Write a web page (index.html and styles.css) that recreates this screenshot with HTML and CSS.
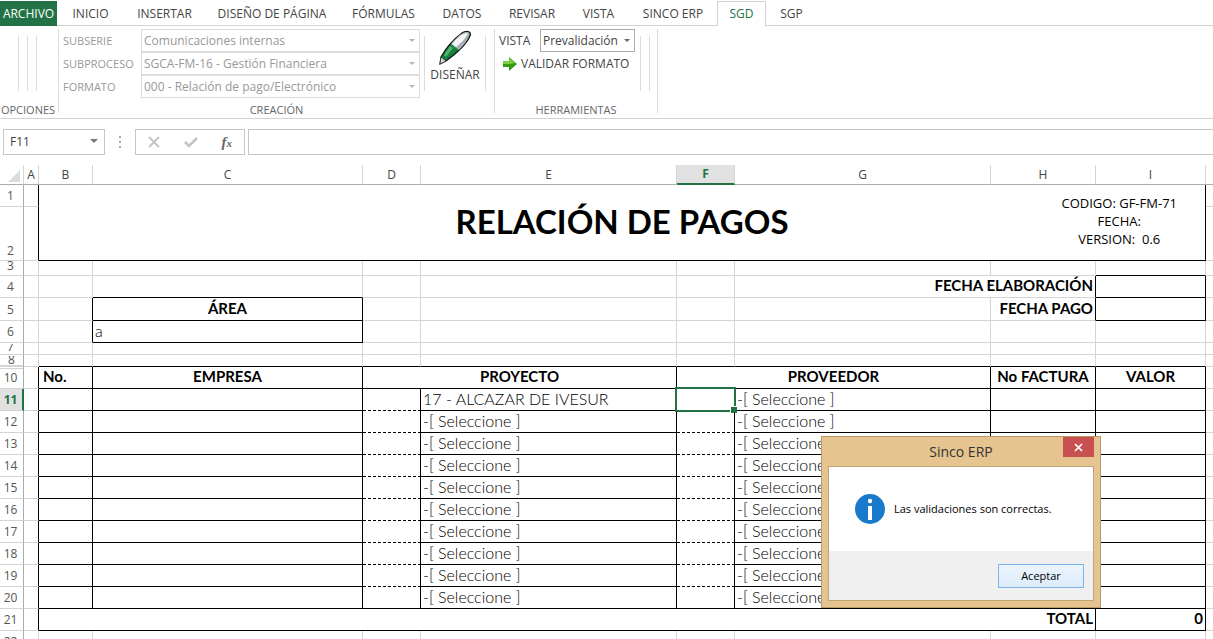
FILE: index.html
```html
<!DOCTYPE html>
<html lang="es">
<head>
<meta charset="utf-8">
<title>Relación de pagos</title>
<link rel="stylesheet" href="styles.css">
</head>
<body>
<nav class="tabs">
  <button class="tab file">ARCHIVO</button>
  <button class="tab t-inicio">INICIO</button>
  <button class="tab t-insertar">INSERTAR</button>
  <button class="tab t-diseno">DISEÑO DE PÁGINA</button>
  <button class="tab t-formulas">FÓRMULAS</button>
  <button class="tab t-datos">DATOS</button>
  <button class="tab t-revisar">REVISAR</button>
  <button class="tab t-vista">VISTA</button>
  <button class="tab t-erp">SINCO ERP</button>
  <button class="tab t-sgd active">SGD</button>
  <button class="tab t-sgp">SGP</button>
</nav>
<section class="ribbon">
  <div class="group g-opciones">
    <div class="tools rules"><i class="rule"></i><i class="rule"></i><i class="rule"></i></div>
    <div class="caption">OPCIONES</div>
  </div>
  <div class="group g-creacion">
    <div class="tools">
      <div class="fields">
        <label for="subserie">SUBSERIE</label>
        <span class="combo"><select id="subserie" disabled><option>Comunicaciones internas</option></select></span>
        <label for="subproceso">SUBPROCESO</label>
        <span class="combo"><select id="subproceso" disabled><option>SGCA-FM-16 - Gestión Financiera</option></select></span>
        <label for="formato">FORMATO</label>
        <span class="combo"><select id="formato" disabled><option>000 - Relación de pago/Electrónico</option></select></span>
      </div>
      <i class="rule"></i>
      <button class="design">
        <svg width="36" height="36" viewBox="0 0 36 36" aria-hidden="true">
          <path d="M3 34 4 27 C9 18 17 9 25 3 C29 0 35 1 33 6 C30 13 20 23 9 31Z" fill="#16803c" stroke="#111" stroke-width="1.200"/>
          <path d="M14 14 C18 9 22 5 26 3 C30 1 34 2 32 6 C30 11 26 16 22 20Z" fill="#aab0b6"/>
          <path d="M15 14 C20 8 25 3 31 3 C29 8 24 13 19 17Z" fill="#f4f5f6"/>
          <path d="M7 25 13 16 16 18 9 27Z" fill="#4fb36d"/>
          <path d="M3 34 4 27 9 31Z" fill="#ddd" stroke="#333" stroke-width=".8"/>
        </svg>
        <span>DISEÑAR</span>
      </button>
      <i class="rule"></i>
    </div>
    <div class="caption">CREACIÓN</div>
  </div>
  <div class="group g-herramientas">
    <div class="tools">
      <div class="stack">
        <div class="view"><label for="vista">VISTA</label><span class="combo on"><select id="vista"><option>Prevalidación</option></select></span></div>
        <button class="validate">
          <svg width="16" height="14" viewBox="0 0 16 14" aria-hidden="true"><path d="M1 4H7V0L15 7 7 14V10H1Z" fill="#369a12"/><path d="M1 4H7V1L13 6 8 7H1Z" fill="#79d040"/></svg>
          <span>VALIDAR FORMATO</span>
        </button>
      </div>
      <i class="rule"></i><i class="rule"></i>
    </div>
    <div class="caption">HERRAMIENTAS</div>
  </div>
</section>
<section class="formula">
  <span class="namebox"><input aria-label="Cuadro de nombres" value="F11"></span>
  <svg class="dots" width="4" height="12" viewBox="0 0 4 12" aria-hidden="true"><path d="M1 0h2v2H1zM1 5h2v2H1zM1 10h2v2H1z" fill="#aaa"/></svg>
  <div class="fx">
    <button aria-label="Cancelar"><svg width="12" height="12" viewBox="0 0 12 12"><path d="M1 1 11 11M11 1 1 11" stroke="#c4c4c4" stroke-width="2"/></svg></button>
    <button aria-label="Introducir"><svg width="14" height="12" viewBox="0 0 14 12"><path d="M1 6 5 10 13 2" fill="none" stroke="#c4c4c4" stroke-width="2.600"/></svg></button>
    <button aria-label="Insertar función" class="fn">f<sub>x</sub></button>
  </div>
  <input class="expr" aria-label="Barra de fórmulas">
</section>
<main class="sheet">
<table class="grid">
  <colgroup><col class="c0"><col class="ca"><col class="cb"><col class="cc"><col class="cd"><col class="ce"><col class="cf"><col class="cg"><col class="ch"><col class="ci"><col></colgroup>
  <thead>
    <tr><th class="corner"><svg width="12" height="12" viewBox="0 0 12 12" aria-hidden="true"><path d="M12 0V12H0Z" fill="#dcdcdc"/></svg></th><th>A</th><th>B</th><th>C</th><th>D</th><th>E</th><th class="sel">F</th><th>G</th><th>H</th><th>I</th><th class="last"></th></tr>
  </thead>
  <tbody>
    <tr class="h22"><th>1</th><td class="r"></td>
      <td class="r b" colspan="8" rowspan="2"><div class="banner"><h1>RELACIÓN DE PAGOS</h1><p>CODIGO: GF-FM-71<br>FECHA:<br>VERSION:&nbsp; 0.6</p></div></td><td></td></tr>
    <tr class="h54"><th>2</th><td class="r"></td><td></td></tr>
    <tr class="h15"><th>3</th><td></td><td></td><td></td><td></td><td></td><td></td><td></td><td></td><td class="b"></td><td></td></tr>
    <tr class="h22"><th>4</th><td></td><td></td><td class="b"></td><td></td><td></td><td></td><td class="r right" colspan="2">FECHA ELABORACIÓN</td><td class="r b"></td><td></td></tr>
    <tr class="h23"><th>5</th><td></td><td class="r"></td><td class="r b center">ÁREA</td><td></td><td></td><td></td><td></td><td class="r right">FECHA PAGO</td><td class="r b"></td><td></td></tr>
    <tr class="h22"><th>6</th><td></td><td class="r"></td><td class="r b text">a</td><td></td><td></td><td></td><td></td><td></td><td></td><td></td></tr>
    <tr class="h12 seven"><th><span>7</span></th><td></td><td></td><td></td><td></td><td></td><td></td><td></td><td></td><td></td><td></td></tr>
    <tr class="h12 eight"><th><span>8</span></th><td></td><td class="b"></td><td class="b"></td><td class="b"></td><td class="b"></td><td class="b"></td><td class="b"></td><td class="b"></td><td class="b"></td><td></td></tr>
    <tr class="h22 heads"><th>10</th><td class="r"></td><td class="r b no">No.</td><td class="r b center">EMPRESA</td><td class="r b center" colspan="2">PROYECTO</td><td class="r b center" colspan="2">PROVEEDOR</td><td class="r b center">No FACTURA</td><td class="r b center">VALOR</td><td></td></tr>
    <tr class="h22"><th class="sel">11</th><td class="r"></td><td class="r b"></td><td class="r b"></td><td class="r d"></td><td class="r b text">17 - ALCAZAR DE IVESUR</td><td class="r d current"><span class="cursor"></span></td><td class="r b text">-[ Seleccione ]</td><td class="r b"></td><td class="r b"></td><td></td></tr>
    <tr class="h22"><th>12</th><td class="r"></td><td class="r b"></td><td class="r b"></td><td class="r d"></td><td class="r b text">-[ Seleccione ]</td><td class="r d"></td><td class="r b text">-[ Seleccione ]</td><td class="r b"></td><td class="r b"></td><td></td></tr>
    <tr class="h22"><th>13</th><td class="r"></td><td class="r b"></td><td class="r b"></td><td class="r d"></td><td class="r b text">-[ Seleccione ]</td><td class="r d"></td><td class="r b text">-[ Seleccione ]</td><td class="r b"></td><td class="r b"></td><td></td></tr>
    <tr class="h22"><th>14</th><td class="r"></td><td class="r b"></td><td class="r b"></td><td class="r d"></td><td class="r b text">-[ Seleccione ]</td><td class="r d"></td><td class="r b text">-[ Seleccione ]</td><td class="r b"></td><td class="r b"></td><td></td></tr>
    <tr class="h22"><th>15</th><td class="r"></td><td class="r b"></td><td class="r b"></td><td class="r d"></td><td class="r b text">-[ Seleccione ]</td><td class="r d"></td><td class="r b text">-[ Seleccione ]</td><td class="r b"></td><td class="r b"></td><td></td></tr>
    <tr class="h22"><th>16</th><td class="r"></td><td class="r b"></td><td class="r b"></td><td class="r d"></td><td class="r b text">-[ Seleccione ]</td><td class="r d"></td><td class="r b text">-[ Seleccione ]</td><td class="r b"></td><td class="r b"></td><td></td></tr>
    <tr class="h22"><th>17</th><td class="r"></td><td class="r b"></td><td class="r b"></td><td class="r d"></td><td class="r b text">-[ Seleccione ]</td><td class="r d"></td><td class="r b text">-[ Seleccione ]</td><td class="r b"></td><td class="r b"></td><td></td></tr>
    <tr class="h22"><th>18</th><td class="r"></td><td class="r b"></td><td class="r b"></td><td class="r d"></td><td class="r b text">-[ Seleccione ]</td><td class="r d"></td><td class="r b text">-[ Seleccione ]</td><td class="r b"></td><td class="r b"></td><td></td></tr>
    <tr class="h22"><th>19</th><td class="r"></td><td class="r b"></td><td class="r b"></td><td class="r d"></td><td class="r b text">-[ Seleccione ]</td><td class="r d"></td><td class="r b text">-[ Seleccione ]</td><td class="r b"></td><td class="r b"></td><td></td></tr>
    <tr class="h22"><th>20</th><td class="r"></td><td class="r b"></td><td class="r b"></td><td class="r b"></td><td class="r b text">-[ Seleccione ]</td><td class="r b"></td><td class="r b text">-[ Seleccione ]</td><td class="r b"></td><td class="r b"></td><td></td></tr>
    <tr class="h22"><th>21</th><td class="r"></td><td class="r b right" colspan="7">TOTAL</td><td class="r b right">0</td><td></td></tr>
    <tr class="h22"><th>22</th><td></td><td></td><td></td><td></td><td></td><td></td><td></td><td></td><td></td><td></td></tr>
  </tbody>
</table>
<div class="dialog" role="dialog" aria-labelledby="dlg-title">
  <header><h2 id="dlg-title">Sinco ERP</h2><button class="close" aria-label="Cerrar"><svg width="9" height="9" viewBox="0 0 9 9"><path d="M1 1 8 8M8 1 1 8" stroke="#fff" stroke-width="1.700"/></svg></button></header>
  <div class="panel">
    <div class="message">
      <svg width="30" height="30" viewBox="0 0 30 30" aria-hidden="true"><circle cx="15" cy="15" r="15" fill="#1979ca"/><circle cx="15" cy="7" r="2.200" fill="#fff"/><path d="M13 12h4v14h-4z" fill="#fff"/></svg>
      <p>Las validaciones son correctas.</p>
    </div>
    <footer><button class="accept">Aceptar</button></footer>
  </div>
</div>
</main>
</body>
</html>
```
FILE: styles.css
```css
* { box-sizing: border-box; }
body {
  margin: 0;
  height: 100vh;
  overflow: hidden;
  display: flex;
  flex-direction: column;
  background: #fff;
  color: #444;
  font: 12px/16px "Open Sans", "Noto Sans", sans-serif;
}
button, input, select { font: inherit; color: inherit; margin: 0; padding: 0; border: 0; background: none; border-radius: 0; }
button { white-space: nowrap; }
svg { display: block; }
h1, h2, p { margin: 0; }

/* Ribbon tabs */
.tabs { display: flex; height: 26px; padding-top: 1px; flex: none; box-shadow: inset 0 -1px #d0d3d1; }
.tab { flex: none; height: 25px; text-align: center; }
.file { width: 57px; background: #217346; color: #fff; }
.t-inicio { width: 67px; }
.t-insertar { width: 81px; }
.t-diseno { width: 134px; }
.t-formulas { width: 89px; }
.t-datos { width: 68px; }
.t-revisar { width: 72px; }
.t-vista { width: 61px; }
.t-erp { width: 88px; }
.t-sgd { width: 49px; }
.t-sgp { width: 51px; }
.active { border: 1px solid #d0d3d1; border-bottom: 0; background: #fff; color: #217346; }

/* Ribbon body */
.ribbon { display: flex; flex: none; height: 93px; padding: 3px 0 5px; border-bottom: 1px solid #d0d3d1; }
.group { display: flex; flex-direction: column; justify-content: space-between; border-right: 1px solid #dcdcdc; }
.g-opciones { width: 59px; }
.g-creacion { width: 436px; }
.g-herramientas { width: 163px; }
.caption { text-align: center; font-size: 11px; line-height: 12px; margin-bottom: -3px; color: #666; }
.g-opciones .caption { margin-right: 2px; }
.tools { display: flex; align-items: flex-start; height: 70px; }
.rules { gap: 8px; padding-left: 18px; }
.rule { flex: none; width: 1px; height: 55px; margin-top: 7px; background: #dcdcdc; }
.fields { display: grid; grid-template-columns: 78px 279px; grid-auto-rows: 23px; align-items: center; padding-left: 4px; margin-right: 4px; color: #999; }
.fields label { font-size: 11px; }
.combo { position: relative; display: block; height: 23px; border: 1px solid #dcdcdc; }
.combo select { appearance: none; width: 100%; height: 21px; padding-left: 2px; opacity: 1; display: block; }
.combo::after, .namebox::after { content: ""; position: absolute; right: 4px; top: 9px; border: 3px solid transparent; border-top-color: #b5b5b5; border-bottom: 0; }
.combo.on { width: 95px; border-color: #ababab; }
.combo.on::after { border-top-color: #666; }
.design { width: 60px; display: flex; flex-direction: column; align-items: center; gap: 1px; padding-top: 1px; }
.stack { width: 145px; padding-left: 4px; }
.view { display: flex; align-items: center; justify-content: space-between; padding-right: 5px; }
.stack + .rule { margin-right: 8px; }
.validate { display: flex; align-items: center; gap: 3px; height: 23px; padding-left: 3px; }

/* Formula bar */
.formula { display: flex; align-items: center; flex: none; height: 46px; padding: 0 0 1px 3px; }
.namebox { position: relative; width: 102px; height: 26px; border: 1px solid #c6c6c6; }
.namebox input { width: 80px; height: 24px; padding-left: 6px; display: block; }
.namebox::after { right: 6px; border-width: 4px 4px 0; border-top-color: #777; }
.dots { margin: 0 13px; }
.fx { display: flex; justify-content: space-around; align-items: center; width: 110px; height: 26px; border: 1px solid #c6c6c6; }
.fn { font: italic bold 15px/16px "Liberation Serif", serif; color: #666; }
.fn sub { font-size: 11px; line-height: 0; vertical-align: baseline; }
.expr { flex: 1; height: 26px; margin-left: 3px; border: 1px solid #c6c6c6; border-right: 0; }

/* Sheet */
.sheet { position: relative; flex: 1; overflow: hidden; min-height: 0; }
.grid { width: 100%; table-layout: fixed; border-collapse: separate; border-spacing: 0; }
.c0 { width: 24px; } .ca { width: 15px; } .cb { width: 54px; } .cc { width: 270px; }
.cd, .cf { width: 58px; } .ce, .cg { width: 256px; } .ch { width: 105px; } .ci { width: 110px; }
.grid th, .grid td { padding: 0; border: 0 solid #d4d4d4; border-width: 0 1px 1px 0; line-height: 19px; white-space: nowrap; }
.grid td:last-child { border-right: 0; }
.grid th { font-weight: 400; text-align: center; }
.grid thead th { height: 20px; border-bottom-color: #ababab; }
.grid thead .last { border-right: 0; }
.grid thead .sel { background: #e1e1e1; border-bottom: 2px solid #217346; color: #217346; font-weight: 700; line-height: 18px; }
.corner svg { margin: 2px 3px 0 auto; }
.grid tbody th { border-right-color: #ababab; padding-right: 2px; color: #555; }
.grid tbody .sel { background: #e1e1e1; border-right: 2px solid #217346; color: #217346; font-weight: 700; padding-right: 1px; }
.grid td { color: #000; font-family: Lato, sans-serif; font-size: 16px; }
.h22 { height: 22px; } .h23 { height: 23px; } .h12 { height: 12px; } .h15 { height: 15px; } .h54 { height: 54px; }
.h54 th { vertical-align: bottom; }
.grid .h15 th { line-height: 10px; vertical-align: top; }
.grid .h12 th, .grid .h12 td, .grid .h15 td { line-height: 10px; font-size: 10px; }
.h12 span { display: block; height: 10px; overflow: hidden; font-size: 12px; }
.seven span { line-height: 5px; }
.eight span { line-height: 7px; border-bottom: 1px solid #d4d4d4; margin-right: -2px; }
.heads th { background: linear-gradient(#d4d4d4, #d4d4d4) 0 1px / 100% 1px no-repeat; }
.grid .r { border-right-color: #000; }
.grid .b { border-bottom-color: #000; }
.grid .d { border-bottom: 1px dashed #000; }
.grid .center, .grid .right, .grid .no { font-weight: 700; font-size: 15px; padding-bottom: 2px; }
.center { text-align: center; }
.right { text-align: right; }
.grid .right { padding-right: 2px; }
.grid .no { padding-left: 4px; }
.grid .text { padding: 0 0 2px 2px; font-weight: 300; }
.banner { display: grid; grid-template-columns: 1fr auto 1fr; align-items: center; padding-bottom: 4px; }
.banner h1 { grid-column: 2; font-size: 33px; line-height: 40px; }
.banner p { justify-self: end; padding-right: 28px; text-align: center; font: 13px/18px "Open Sans", sans-serif; }
.current { position: relative; }
.cursor { position: absolute; inset: -2px; border: 2px solid #217346; }
.cursor::after { content: ""; position: absolute; right: -3px; bottom: -3px; width: 6px; height: 6px; background: #217346; border: 1px solid #fff; border-width: 1px 0 0 1px; }

/* Message box */
.dialog { position: absolute; left: 821px; top: 271px; width: 280px; border: 1px solid #b39b6c; background: #e5c48f; padding: 0 6px 6px; color: #000; }
.dialog header { display: flex; height: 29px; align-items: flex-start; }
.dialog h2 { flex: 1; padding-left: 31px; text-align: center; font-size: 14px; line-height: 29px; font-weight: 400; color: #333; }
.close { display: grid; place-items: center; width: 31px; height: 20px; background: #c75050; }
.panel { border: 1px solid #c0a573; background: #fff; }
.message { display: flex; align-items: center; gap: 9px; height: 84px; padding-left: 26px; font-size: 11px; }
.panel footer { display: flex; justify-content: flex-end; padding: 13px 9px 12px; background: #f0f0f0; }
.accept { width: 86px; height: 24px; border: 1px solid #7eb4ea; background: linear-gradient(#ecf4fc, #dcecfc); font-size: 11px; }
```
